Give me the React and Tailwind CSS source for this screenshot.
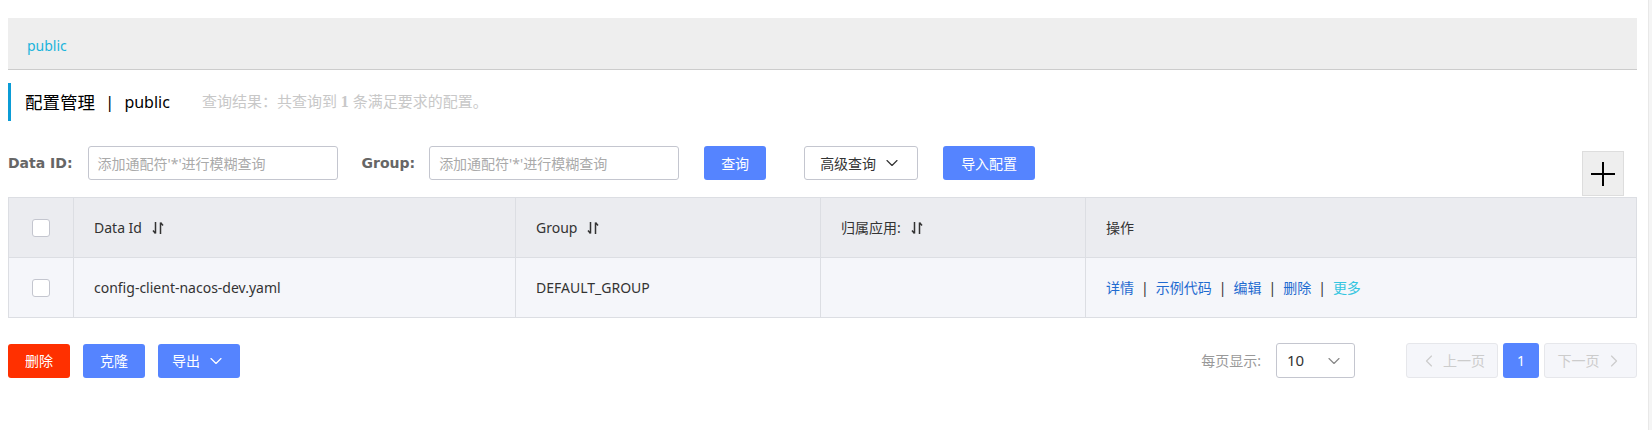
import React from 'react';
import { ChevronDown, ChevronLeft, ChevronRight } from 'lucide-react';

const SortIcon = () => (
  <svg width="12" height="16" viewBox="0 0 12 16" className="ml-[10px] inline-block">
    <path d="M3.5 2 V13.5 M3.5 13.5 L1 10.5" stroke="#333" strokeWidth="1.5" fill="none" />
    <path d="M8.5 14 V2.5 M8.5 2.5 L11 5.5" stroke="#333" strokeWidth="1.5" fill="none" />
  </svg>
);

const Checkbox = () => (
  <div className="w-[18px] h-[18px] rounded-[3px] border border-[#c4c6cf] bg-white" />
);

const App = () => {
  const columns = 'grid grid-cols-[64px_442px_305px_265px_1fr]';

  return (
    <div className="flex h-[430px] w-full bg-white font-['Noto_Sans','Noto_Sans_CJK_SC',sans-serif] text-[14px] text-[#333]">
      <div className="w-[1648px] pl-2 pt-[18px]">
        <div className="w-[1629px]">
          {/* namespace bar */}
          <div className="h-[52px] bg-[#eeeeee] border-b border-[#cccccc] pl-[19px] pt-[3px] flex items-center">
            <span className="text-[#1ab4dc] text-[14px]">public</span>
          </div>

          {/* title */}
          <div className="mt-[13px] h-[38px] border-l-[3px] border-[#0b9cd6] pl-[14px] flex items-center">
            <span className="text-[17.5px] text-black">配置管理</span>
            <span className="mx-[10px] text-[17px] text-black">|</span>
            <span className="text-[16px] text-black">public</span>
            <span className="ml-[32px] text-[15px] text-[#c8c8c8]">
              查询结果：共查询到 <b className="font-['Liberation_Serif',serif] text-[16px]">1</b> 条满足要求的配置。
            </span>
          </div>

          {/* search row */}
          <div className="mt-[25px] flex items-start">
            <div className="h-[34px] flex items-center font-['DejaVu_Sans',sans-serif] font-bold text-[#666] text-[14px]">
              Data ID:
            </div>
            <div className="ml-[15px] w-[250px] h-[34px] border border-[#c4c6cf] rounded-[3px] flex items-center px-[9px] text-[#aaa]">
              添加通配符'*'进行模糊查询
            </div>
            <div className="ml-[24px] h-[34px] flex items-center font-['DejaVu_Sans',sans-serif] font-bold text-[#666] text-[14px]">
              Group:
            </div>
            <div className="ml-[14px] w-[250px] h-[34px] border border-[#c4c6cf] rounded-[3px] flex items-center px-[9px] text-[#aaa]">
              添加通配符'*'进行模糊查询
            </div>
            <button className="ml-[25px] w-[62px] h-[34px] rounded-[3px] bg-[#5584ff] text-white">查询</button>
            <button className="ml-[38px] w-[114px] h-[34px] rounded-[3px] border border-[#c4c6cf] bg-white text-[#333] flex items-center justify-center gap-[6px]">
              高级查询 <ChevronDown size={20} strokeWidth={1.4} />
            </button>
            <button className="ml-[25px] w-[92px] h-[34px] rounded-[3px] bg-[#5584ff] text-white">导入配置</button>
            <button className="ml-auto mr-[13px] mt-[5px] w-[42px] h-[45px] bg-[#eeeeee] border border-[#dddddd] flex items-center justify-center">
              <svg width="26" height="26" viewBox="0 0 26 26">
                <path d="M13 1 V25 M1 13 H25" stroke="#000" strokeWidth="2" />
              </svg>
            </button>
          </div>

          {/* table */}
          <div className="mt-px border border-[#dcdee3]">
            <div className={`${columns} h-[60px] bg-[#ebecf0] border-b border-[#dcdee3]`}>
              <div className="flex items-center justify-center"><Checkbox /></div>
              <div className="border-l border-[#dcdee3] flex items-center pl-5">Data Id<SortIcon /></div>
              <div className="border-l border-[#dcdee3] flex items-center pl-5">Group<SortIcon /></div>
              <div className="border-l border-[#dcdee3] flex items-center pl-5">归属应用:<SortIcon /></div>
              <div className="border-l border-[#dcdee3] flex items-center pl-5">操作</div>
            </div>
            <div className={`${columns} h-[59px] bg-[#f5f6fa]`}>
              <div className="flex items-center justify-center"><Checkbox /></div>
              <div className="border-l border-[#dcdee3] flex items-center pl-5">config-client-nacos-dev.yaml</div>
              <div className="border-l border-[#dcdee3] flex items-center pl-5">DEFAULT_GROUP</div>
              <div className="border-l border-[#dcdee3]" />
              <div className="border-l border-[#dcdee3] flex items-center pl-5">
                <span className="text-[#1f6bd0]">详情</span>
                <span className="mx-[7px] text-[#333]">|</span>
                <span className="text-[#1f6bd0]">示例代码</span>
                <span className="mx-[7px] text-[#333]">|</span>
                <span className="text-[#1f6bd0]">编辑</span>
                <span className="mx-[7px] text-[#333]">|</span>
                <span className="text-[#1f6bd0]">删除</span>
                <span className="mx-[7px] text-[#333]">|</span>
                <span className="text-[#33c5e0]">更多</span>
              </div>
            </div>
          </div>

          {/* footer */}
          <div className="mt-[25px] flex items-center">
            <button className="w-[62px] h-[34px] rounded-[3px] bg-[#ff3000] text-white">删除</button>
            <button className="ml-[13px] w-[62px] h-[34px] rounded-[3px] bg-[#5584ff] text-white">克隆</button>
            <button className="ml-[13px] w-[82px] h-[34px] rounded-[3px] bg-[#5584ff] text-white flex items-center justify-center gap-[6px]">
              导出 <ChevronDown size={20} strokeWidth={1.4} />
            </button>

            <span className="ml-auto text-[#999]">每页显示:</span>
            <div className="ml-[15px] w-[79px] h-[35px] rounded-[3px] border border-[#c4c6cf] flex items-center justify-between pl-[10px] pr-[10px]">
              <span className="text-[#333] text-[15px]">10</span>
              <ChevronDown size={20} strokeWidth={1.4} className="text-[#888]" />
            </div>
            <button className="ml-[51px] w-[92px] h-[35px] rounded-[3px] border border-[#e6e7eb] bg-[#f5f6fa] text-[#ccc] flex items-center justify-center gap-[4px]">
              <ChevronLeft size={20} strokeWidth={1.4} /> 上一页
            </button>
            <button className="ml-[5px] w-[36px] h-[35px] rounded-[3px] bg-[#5584ff] text-white">1</button>
            <button className="ml-[5px] w-[93px] h-[35px] rounded-[3px] border border-[#e6e7eb] bg-[#f5f6fa] text-[#ccc] flex items-center justify-center gap-[4px]">
              下一页 <ChevronRight size={20} strokeWidth={1.4} />
            </button>
          </div>
        </div>
      </div>
      <div className="flex-1 border-l border-[#e8e8e8] bg-[#f5f5f5]" />
    </div>
  );
};

export default App;
